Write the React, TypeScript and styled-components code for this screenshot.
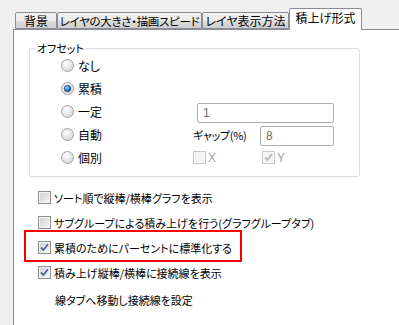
import React from 'react';
import styled, { createGlobalStyle } from 'styled-components';

const GlobalStyle = createGlobalStyle`
  html, body {
    margin: 0;
    padding: 0;
    background: #f0f0f0;
  }
  body {
    font-family: "Noto Sans CJK JP", "Noto Sans", sans-serif;
    font-size: 11px;
    color: #000;
    font-feature-settings: "palt";
  }
`;

const TABS = [
  { label: '背景', width: 42 },
  { label: 'レイヤの大きさ・描画スピード', width: 145 },
  { label: 'レイヤ表示方法', width: 87 },
  { label: '積上げ形式', width: 73, active: true },
];

const OPTIONS = ['なし', '累積', '一定', '自動', '個別'];

function Radio({ checked }: { checked?: boolean }) {
  return (
    <RadioIcon width="13" height="13" viewBox="0 0 13 13">
      <defs>
        <radialGradient id={checked ? 'rg-on' : 'rg-off'} cx="0.4" cy="0.35" r="0.7">
          <stop offset="0" stopColor="#ffffff" />
          <stop offset="1" stopColor="#d4d4d4" />
        </radialGradient>
        <radialGradient id="rg-dot" cx="0.4" cy="0.35" r="0.7">
          <stop offset="0" stopColor="#9ddcfb" />
          <stop offset="0.5" stopColor="#2d8bd4" />
          <stop offset="1" stopColor="#11407a" />
        </radialGradient>
      </defs>
      <circle cx="6.5" cy="6.5" r="6" fill={`url(#${checked ? 'rg-on' : 'rg-off'})`} stroke="#a2a2a2" />
      {checked && <circle cx="6.5" cy="6.5" r="3.3" fill="url(#rg-dot)" stroke="#1d3f6e" strokeWidth="0.6" />}
    </RadioIcon>
  );
}

function Check({ checked, disabled }: { checked?: boolean; disabled?: boolean }) {
  return (
    <Box $disabled={disabled}>
      {checked && (
        <svg width="9" height="9" viewBox="0 0 9 9">
          <path
            d="M1 4.5 L3.3 7 L8 1.2"
            fill="none"
            stroke={disabled ? '#b4b4b4' : '#4a5f97'}
            strokeWidth="1.7"
          />
        </svg>
      )}
    </Box>
  );
}

export default function App() {
  return (
    <>
      <GlobalStyle />
      <Dialog>
        <TabStrip>
          {TABS.map((t) => (
            <Tab key={t.label} $w={t.width} $active={t.active}>
              {t.label}
            </Tab>
          ))}
        </TabStrip>
        <Panel>
          <Group>
            <Legend>オフセット</Legend>
            <OptionGrid>
              {OPTIONS.map((o, i) => (
                <RadioItem key={o} style={{ gridRow: i + 1 }}>
                  <Radio checked={o === '累積'} />
                  <span>{o}</span>
                </RadioItem>
              ))}
              <ValueInput style={{ gridRow: 3 }} $wide readOnly value="1" />
              <GapLabel>ギャップ(%)</GapLabel>
              <ValueInput style={{ gridRow: 4 }} readOnly value="8" />
              <AxisItem $col={2}>
                <Check disabled />
                <span>X</span>
              </AxisItem>
              <AxisItem $col={3}>
                <Check checked disabled />
                <span>Y</span>
              </AxisItem>
            </OptionGrid>
          </Group>
          <CheckList>
            <CheckRow>
              <Check />
              <span>ソート順で縦棒/横棒グラフを表示</span>
            </CheckRow>
            <CheckRow>
              <Check />
              <span>サブグループによる積み上げを行う(グラフグループタブ)</span>
            </CheckRow>
            <CheckRow>
              <Highlight />
              <Check checked />
              <span>累積のためにパーセントに標準化する</span>
            </CheckRow>
            <CheckRow>
              <Check checked />
              <span>積み上げ縦棒/横棒に接続線を表示</span>
            </CheckRow>
            <NoteRow>線タブへ移動し接続線を設定</NoteRow>
          </CheckList>
        </Panel>
      </Dialog>
    </>
  );
}

const Dialog = styled.div`
  width: 399px;
  height: 325px;
  overflow: hidden;
  display: flex;
  flex-direction: column;
`;

const TabStrip = styled.div`
  display: flex;
  align-items: flex-end;
  height: 29px;
  padding-left: 15px;
  position: relative;
  z-index: 1;
`;

const Tab = styled.div<{ $w: number; $active?: boolean }>`
  box-sizing: border-box;
  width: ${(p) => p.$w}px;
  height: ${(p) => (p.$active ? 22 : 17)}px;
  margin-bottom: ${(p) => (p.$active ? -1 : 0)}px;
  border: 1px solid #898c95;
  border-bottom: ${(p) => (p.$active ? 'none' : '1px solid #898c95')};
  border-radius: 2px 2px 0 0;
  background: ${(p) =>
    p.$active ? '#fff' : 'linear-gradient(#f2f2f2 0%, #ebebeb 50%, #dddddd 51%, #cfcfcf 100%)'};
  display: flex;
  align-items: center;
  justify-content: center;
  padding-bottom: ${(p) => (p.$active ? 3 : 0)}px;
  font-size: ${(p) => (p.$w > 100 ? 11.5 : 12)}px;
  line-height: 14px;
  white-space: nowrap;
  letter-spacing: ${(p) => (p.$w > 100 ? -0.3 : 0)}px;
`;

const Panel = styled.div`
  flex: 1;
  margin-left: 13px;
  background: #fff;
  border-left: 1px solid #898c95;
  border-top: 1px solid #898c95;
  display: flex;
  flex-direction: column;
`;

const Group = styled.fieldset`
  margin: 10px 0 0 15px;
  width: 331px;
  box-sizing: border-box;
  padding: 0 0 7px 0;
  border: 1px solid #d5dfe5;
  border-radius: 3px;
  min-width: 0;
`;

const Legend = styled.legend`
  margin-left: 5px;
  padding: 0 2px;
  line-height: 16px;
`;

const OptionGrid = styled.div`
  display: grid;
  grid-template-columns: 132px 67px 74px;
  grid-template-rows: repeat(5, 23px);
  margin-top: -2px;
  padding-left: 31px;
  align-items: center;
`;

const RadioItem = styled.div`
  grid-column: 1;
  display: flex;
  align-items: center;
  gap: 4px;
  font-size: 12px;
`;

const RadioIcon = styled.svg`
  display: block;
  flex: none;
`;

const ValueInput = styled.input<{ $wide?: boolean }>`
  grid-column: ${(p) => (p.$wide ? '2 / span 2' : '3')};
  margin: ${(p) => (p.$wide ? '3px 0 0 4px' : '3px 0 0 0')};
  box-sizing: border-box;
  height: 20px;
  width: ${(p) => (p.$wide ? 137 : 74)}px;
  border: 1px solid #abadb3;
  border-radius: 2px;
  padding: 0 0 0 5px;
  font: inherit;
  font-family: "Liberation Sans", "Noto Sans", sans-serif;
  font-size: 12px;
  color: #6d6d6d;
  background: #fff;
  outline: none;
`;

const GapLabel = styled.span`
  grid-column: 2;
  grid-row: 4;
  letter-spacing: -0.3px;
`;

const AxisItem = styled.div<{ $col: number }>`
  grid-row: 5;
  grid-column: ${(p) => p.$col};
  padding-left: ${(p) => (p.$col === 3 ? 2 : 0)}px;
  display: flex;
  align-items: center;
  gap: 2px;
  color: #a0a0a0;
  font-family: "Liberation Sans", "Noto Sans", sans-serif;
  font-size: 12px;
`;

const Box = styled.span<{ $disabled?: boolean }>`
  box-sizing: border-box;
  flex: none;
  width: 13px;
  height: 13px;
  border: 1px solid ${(p) => (p.$disabled ? '#c8c8c8' : '#8e8f8f')};
  background: ${(p) =>
    p.$disabled
      ? '#f4f4f4'
      : 'linear-gradient(135deg, #cfcfcf 0%, #e4e4e4 55%, #f6f6f6 100%)'};
  box-shadow: inset 0 0 0 1px ${(p) => (p.$disabled ? '#f8f8f8' : '#f4f4f4')};
  display: flex;
  align-items: center;
  justify-content: center;
`;

const CheckList = styled.div`
  display: flex;
  flex-direction: column;
  margin-top: 8px;
  padding-left: 24px;
`;

const CheckRow = styled.div`
  position: relative;
  height: 25px;
  display: flex;
  align-items: center;
  gap: 3px;
`;

const Highlight = styled.div`
  position: absolute;
  left: -14px;
  top: -5px;
  width: 218px;
  height: 32px;
  box-sizing: border-box;
  border: 2px solid #ff0000;
  pointer-events: none;
`;

const NoteRow = styled.div`
  height: 25px;
  margin-top: 2px;
  padding-left: 17px;
  display: flex;
  align-items: center;
`;
